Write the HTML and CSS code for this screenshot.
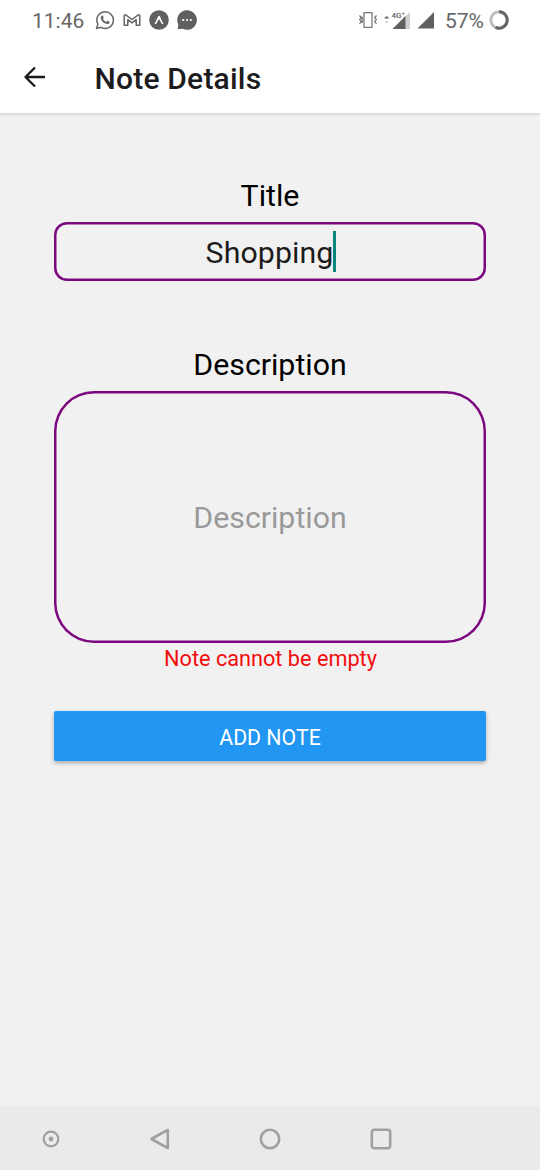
FILE: index.html
```html
<!DOCTYPE html>
<html lang="en">
<head>
<meta charset="utf-8">
<title>Note Details</title>
<link rel="stylesheet" href="styles.css">
</head>
<body>
<div class="screen">
  <div class="status">
    <span class="clock">11:46</span>
    <div class="notices">
      <svg width="20" height="20" viewBox="0 0 20 20"><path d="M2.9 14.2A8.3 8.3 0 1 1 6 17.3L1.5 18.5Z" fill="none" stroke="#666" stroke-width="1.5" stroke-linejoin="round"/><path d="M6.2 6.3C7 5.1 7.8 5.3 8.1 6L8.7 7.5C8.8 8 8.2 8.5 8 8.9C8.8 10.4 9.8 11.3 11.3 12L12.3 10.9C12.6 10.7 13 10.9 14.5 11.7C14.7 13.2 13.7 14.2 12.2 14.1C8.7 13.7 5.7 10.3 5.7 7.7C5.7 7.2 5.9 6.7 6.2 6.3Z" fill="#666"/></svg>
      <svg width="18" height="20" viewBox="0 0 18 20"><path d="M1.2 15.3V6.1Q1.2 4.6 2.8 4.8L9 9.5L15.2 4.8Q16.8 4.6 16.8 6.1V15.3H13.2V9.7L9 12.8L4.8 9.7V15.3Z" fill="none" stroke="#666" stroke-width="1.5" stroke-linejoin="round"/></svg>
      <svg width="20" height="20" viewBox="0 0 20 20"><circle cx="10" cy="10" r="9.8" fill="#606060"/><path d="M5.5 13.7C7 11.5 8 8.4 9 6.4Q10 5.2 11 6.4C12 8.4 13 11.5 14.5 13.7L13.2 14.3C11.9 13 11.2 10.3 10 9.2C8.8 10.3 8.1 13 6.8 14.3Z" fill="#fff"/></svg>
      <svg width="20" height="20" viewBox="0 0 20 20"><path d="M10 .2A9.8 9.8 0 1 1 5.6 18.7L.8 19.2L1.3 14.6A9.8 9.8 0 0 1 10 .2Z" fill="#606060"/><g fill="#fff"><circle cx="6.2" cy="10" r="1.1"/><circle cx="10" cy="10" r="1.1"/><circle cx="13.8" cy="10" r="1.1"/></g></svg>
    </div>
    <div class="system">
      <svg width="18" height="18" viewBox="0 0 18 18"><g fill="none" stroke="#707070" stroke-width="1.2"><rect x="5" y="1.7" width="8" height="14.6"/><path d="M.5 4.5L2.3 6.5L.5 8.5L2.3 10.5L.5 13M3.2 5.5V12M17.500 4.500L15.700 6.500L17.500 8.500L15.700 10.500L17.500 13"/></g></svg>
      <svg class="mobile" width="27" height="20" viewBox="0 0 27 20"><path d="M0 8.500L2.700 6L5.400 8.500Z" fill="#606060"/><path d="M.8 11.500H4.600L2.700 13.300Z" fill="#bbb"/><path d="M8.500 19L26 2V19Z" fill="#d0d0d0"/><path d="M8.500 19L21.500 6V19Z" fill="#606060"/><text x="7.500" y="7.500" class="network">4G⁺</text></svg>
      <svg width="18" height="18" viewBox="0 0 18 18"><path d="M.5 17.500L17 1V17.500Z" fill="#606060"/></svg>
      <span class="battery">57%</span>
      <svg width="20" height="20" viewBox="0 0 20 20"><circle cx="10" cy="10" r="8.200" fill="none" stroke="#bdbdbd" stroke-width="3"/><path d="M10 1.800A8.200 8.200 0 1 1 6.500 17.400" fill="none" stroke="#666" stroke-width="3"/></svg>
    </div>
  </div>
  <header class="header">
    <svg class="back" width="24" height="24" viewBox="0 0 24 24"><path d="M12 2.500L2.500 12L12 21.500M2.700 12H22" fill="none" stroke="#1a1a1a" stroke-width="2.300" stroke-linejoin="round"/></svg>
    <h1 class="heading">Note Details</h1>
  </header>
  <main class="form">
    <div class="label">Title</div>
    <div class="field title-field"><span class="value">Shopping</span><span class="caret"></span></div>
    <div class="label description-label">Description</div>
    <div class="field description-field">Description</div>
    <div class="error">Note cannot be empty</div>
    <button class="add">ADD NOTE</button>
  </main>
  <nav class="nav">
    <svg width="22" height="22" viewBox="0 0 22 22"><circle cx="11" cy="11" r="7.300" fill="none" stroke="#a0a0a0" stroke-width="2.200"/><circle cx="11" cy="11" r="2.400" fill="#a0a0a0"/></svg>
    <svg width="22" height="22" viewBox="0 0 22 22"><path d="M2.400 11L18.800 1.900V20.100Z" fill="none" stroke="#a0a0a0" stroke-width="2.600" stroke-linejoin="round"/></svg>
    <svg width="22" height="22" viewBox="0 0 22 22"><circle cx="11" cy="11" r="9.200" fill="none" stroke="#a0a0a0" stroke-width="2.600"/></svg>
    <svg width="22" height="22" viewBox="0 0 22 22"><rect x="1.800" y="1.800" width="18.400" height="18.400" rx="2.500" fill="none" stroke="#a0a0a0" stroke-width="2.600"/></svg>
  </nav>
</div>
</body>
</html>
```
FILE: styles.css
```css
* { box-sizing: border-box; }
body { margin: 0; font-family: Roboto, sans-serif; }
svg { display: block; flex: none; }
.screen { width: 540px; height: 1170px; display: flex; flex-direction: column; background: #f1f1f1; }
.status { height: 40px; flex: none; display: flex; align-items: center; padding: 0 31px 0 32px; background: #fff; color: #666; font-size: 21px; line-height: 40px; }
.clock { width: 62.500px; padding-top: 2px; }
.notices { display: flex; align-items: center; gap: 8px; }
.system { display: flex; align-items: center; margin-left: auto; }
.mobile { margin: 0 6px 0 7px; }
.network { font: 500 8px Roboto, sans-serif; fill: #606060; }
.battery { margin: 2px 5px 0 10px; }
.header { height: 73px; flex: none; display: flex; align-items: center; padding: 0 22px; background: #fff; box-shadow: 0 2px 2px rgba(0, 0, 0, .1); }
.back { margin-left: 1px; }
.heading { margin: 4px 0 0 47.500px; font-size: 30px; font-weight: 500; letter-spacing: .2px; line-height: 40px; color: #1c1c1e; }
.form { flex: 1; display: flex; flex-direction: column; padding: 63px 54px 0; font-size: 30.300px; text-align: center; }
.label { height: 45.500px; line-height: 40px; color: #000; }
.field { display: flex; align-items: center; justify-content: center; box-shadow: inset 0 0 0 2.500px #7b087e; }
.title-field { height: 59.500px; padding-left: 1px; border-radius: 13px; color: #1c1c1c; }
.value { margin-top: 2px; letter-spacing: .1px; }
.caret { width: 3px; height: 41px; margin-right: -1px; background: #07877b; }
.description-label { margin-top: 64px; }
.description-field { height: 252.500px; padding-top: 2px; border-radius: 40px; color: #999; }
.error { padding: 2px 0 0 1px; font-size: 21.700px; line-height: 28px; color: #f20d0d; }
.add { height: 50px; margin-top: 38px; padding: 2px 0 0; border: 0; border-radius: 2px; background: #2196f3; color: #fff; font: 400 21.300px Roboto, sans-serif; box-shadow: 0 2px 4px rgba(0, 0, 0, .3); }
.nav { height: 64px; flex: none; display: flex; align-items: center; gap: 88px; padding: 1px 0 0 40px; background: #eaeaea; }
.nav svg:nth-child(2) { margin-left: -1px; }
.nav svg:nth-child(4) { margin-left: 1px; }
```
